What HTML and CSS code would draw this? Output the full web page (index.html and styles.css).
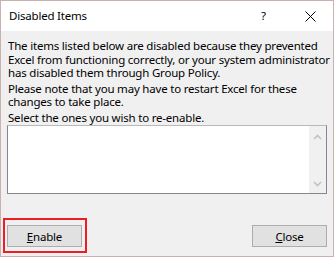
FILE: index.html
```html
<!DOCTYPE html>
<html>
<head>
<meta charset="utf-8">
<link rel="stylesheet" href="styles.css">
</head>
<body>
<div class="dialog">
  <div class="titlebar">
    <span class="title">Disabled Items</span>
    <span class="help">?</span>
    <span class="close-x">
      <svg width="11" height="11" viewBox="0 0 11 11"><path d="M0.5 0.5 L10.5 10.5 M10.5 0.5 L0.5 10.5" stroke="#000" stroke-width="1" fill="none"/></svg>
    </span>
  </div>
  <div class="content">
    <p>The items listed below are disabled because they prevented<br>Excel from functioning correctly, or your system administrator<br>has disabled them through Group Policy.</p>
    <p>Please note that you may have to restart Excel for these<br>changes to take place.</p>
    <p>Select the ones you wish to re-enable.</p>
    <div class="listbox">
      <div class="list-area"></div>
      <div class="scrollbar">
        <svg width="9" height="6" viewBox="0 0 9 6"><path d="M1 5 L4.5 1.5 L8 5" stroke="#c2c2c2" stroke-width="1.6" fill="none"/></svg>
        <svg width="9" height="6" viewBox="0 0 9 6"><path d="M1 1 L4.5 4.5 L8 1" stroke="#c2c2c2" stroke-width="1.6" fill="none"/></svg>
      </div>
    </div>
    <div class="buttons">
      <button class="btn btn-highlight"><u>E</u>nable</button>
      <button class="btn"><u>C</u>lose</button>
    </div>
  </div>
</div>
</body>
</html>
```
FILE: styles.css
```css
* { box-sizing: border-box; }
html, body { margin: 0; padding: 0; }
body {
  width: 334px;
  height: 257px;
  font-family: "Noto Sans", "Liberation Sans", sans-serif;
  font-size: 11.5px;
  letter-spacing: -0.2px;
  color: #000;
  background: #f0f0f0;
}
.dialog {
  width: 334px;
  height: 257px;
  border: 1px solid #c9b2ad;
  display: flex;
  flex-direction: column;
}
.titlebar {
  height: 30px;
  background: #fff;
  display: flex;
  align-items: center;
  padding-left: 8px;
}
.title {
  flex: 1;
  padding-bottom: 1px;
}
.help {
  width: 8px;
  margin-right: 36px;
  padding-bottom: 1px;
}
.close-x {
  display: flex;
  margin-right: 17px;
}
.content {
  flex: 1;
  background: #f0f0f0;
  padding: 8px 6px 9px 6px;
  display: flex;
  flex-direction: column;
}
p {
  margin: 0 0 2px 0;
  line-height: 13.5px;
  padding-left: 1px;
  white-space: nowrap;
}
.listbox {
  margin-top: -1px;
  height: 69px;
  flex: none;
  border: 1px solid #828790;
  border-top-color: #b9b9b9;
  background: #fff;
  display: flex;
}
.list-area { flex: 1; }
.scrollbar {
  width: 17px;
  background: #f0f0f0;
  display: flex;
  flex-direction: column;
  justify-content: space-between;
  align-items: center;
  padding: 8px 0 6px 0;
}
.buttons {
  margin-top: auto;
  display: flex;
  justify-content: space-between;
}
.btn {
  width: 75px;
  height: 22px;
  background: #e1e1e1;
  border: 1px solid #adadad;
  font-family: inherit;
  font-size: 11.5px;
  letter-spacing: -0.2px;
  color: #000;
  padding: 0;
  position: relative;
}
.btn-highlight::after {
  content: "";
  position: absolute;
  left: -5px;
  top: -8px;
  right: -6px;
  bottom: -7px;
  border: 2px solid #ee1c25;
}
```
